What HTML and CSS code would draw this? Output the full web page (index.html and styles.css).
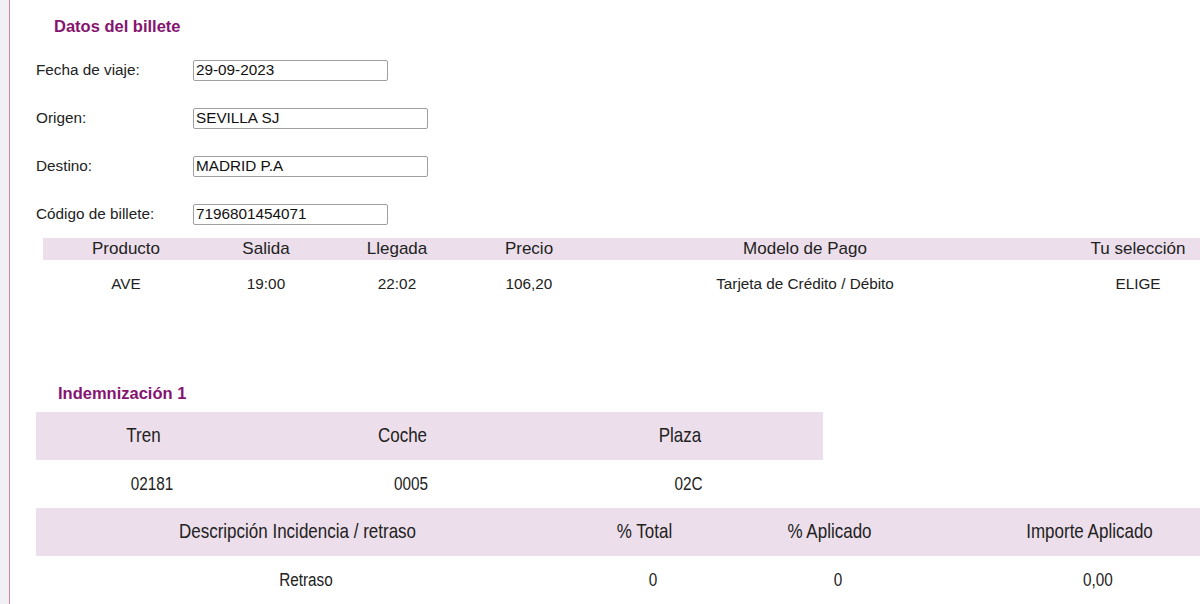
FILE: index.html
```html
<!DOCTYPE html>
<html lang="es">
<head>
<meta charset="utf-8">
<title>Datos del billete</title>
<link rel="stylesheet" href="styles.css">
</head>
<body>
<div class="page">
  <aside class="side"></aside>
  <main class="content">
    <h2 class="title title-datos">Datos del billete</h2>
    <div class="form">
      <div class="row"><label class="lbl">Fecha de viaje:</label><input class="inp w-short" type="text" value="29-09-2023"></div>
      <div class="row"><label class="lbl">Origen:</label><input class="inp w-long" type="text" value="SEVILLA SJ"></div>
      <div class="row"><label class="lbl">Destino:</label><input class="inp w-long" type="text" value="MADRID P.A"></div>
      <div class="row"><label class="lbl">Código de billete:</label><input class="inp w-short" type="text" value="7196801454071"></div>
    </div>

    <div class="tbl tbl-billete">
      <div class="thead">
        <div>Producto</div><div>Salida</div><div>Llegada</div><div>Precio</div><div>Modelo de Pago</div><div>Tu selección</div>
      </div>
      <div class="trow">
        <div>AVE</div><div>19:00</div><div>22:02</div><div>106,20</div><div>Tarjeta de Crédito / Débito</div><div>ELIGE</div>
      </div>
    </div>

    <h2 class="title title-indem">Indemnización 1</h2>
    <div class="tbl tbl-tren">
      <div class="thead tall">
        <div>Tren</div><div>Coche</div><div>Plaza</div>
      </div>
      <div class="trow tall">
        <div>02181</div><div>0005</div><div>02C</div>
      </div>
    </div>
    <div class="tbl tbl-inc">
      <div class="thead tall">
        <div>Descripción Incidencia / retraso</div><div>% Total</div><div>% Aplicado</div><div>Importe Aplicado</div>
      </div>
      <div class="trow tall">
        <div>Retraso</div><div>0</div><div>0</div><div>0,00</div>
      </div>
    </div>
  </main>
</div>
</body>
</html>
```

FILE: styles.css
```css
html, body {
  margin: 0;
  padding: 0;
  background: #ffffff;
  overflow: hidden;
}
body {
  font-family: "Liberation Sans", Arial, sans-serif;
  color: #222222;
}
.page {
  display: flex;
  width: 1200px;
  height: 604px;
  overflow: hidden;
}
.side {
  flex: 0 0 9px;
  background: #f0f0f5;
  border-right: 1px solid #d9829f;
}
.content {
  flex: 1 1 auto;
  min-width: 0;
  padding-top: 16px;
}
.title {
  margin: 0;
  height: 20px;
  line-height: 20px;
  font-size: 16.5px;
  font-weight: bold;
  color: #86146f;
}
.title-datos {
  padding-left: 44px;
  margin-bottom: 10px;
}
.title-indem {
  padding-left: 48px;
  margin-top: 75px;
  margin-bottom: 9px;
}
.form {
  display: flex;
  flex-direction: column;
  padding-left: 26px;
}
.row {
  display: flex;
  align-items: center;
  height: 48px;
}
.lbl {
  width: 157px;
  font-size: 15.3px;
}
.inp {
  box-sizing: border-box;
  height: 21px;
  border: 1px solid #a0a0a0;
  border-radius: 2px;
  padding: 0 2px;
  font-family: "Liberation Sans", Arial, sans-serif;
  font-size: 15.3px;
  color: #111111;
  background: #ffffff;
}
.w-short { width: 195px; }
.w-long { width: 235px; }

.tbl {
  display: flex;
  flex-direction: column;
}
.thead, .trow {
  display: grid;
  align-items: center;
  text-align: center;
}
.thead {
  background: #ecdfeb;
  font-size: 17px;
}
.trow {
  font-size: 15.3px;
}
.tbl-billete {
  margin-left: 33px;
  width: 1210px;
}
.tbl-billete .thead,
.tbl-billete .trow {
  grid-template-columns: 166px 114px 148px 116px 436px 230px;
}
.tbl-billete .thead { height: 22px; }
.tbl-billete .trow { height: 48px; }

.tbl-tren {
  margin-left: 26px;
  width: 787px;
}
.tbl-tren .thead,
.tbl-tren .trow {
  grid-template-columns: 232px 286px 269px;
}
.tbl-inc {
  margin-left: 26px;
  width: 1214px;
}
.tbl-inc .thead,
.tbl-inc .trow {
  grid-template-columns: 540px 154px 216px 304px;
}
.tall { height: 48px; }
.thead.tall > div {
  padding-right: 17px;
}
.tall > div {
  transform: scaleY(1.15);
}
```
